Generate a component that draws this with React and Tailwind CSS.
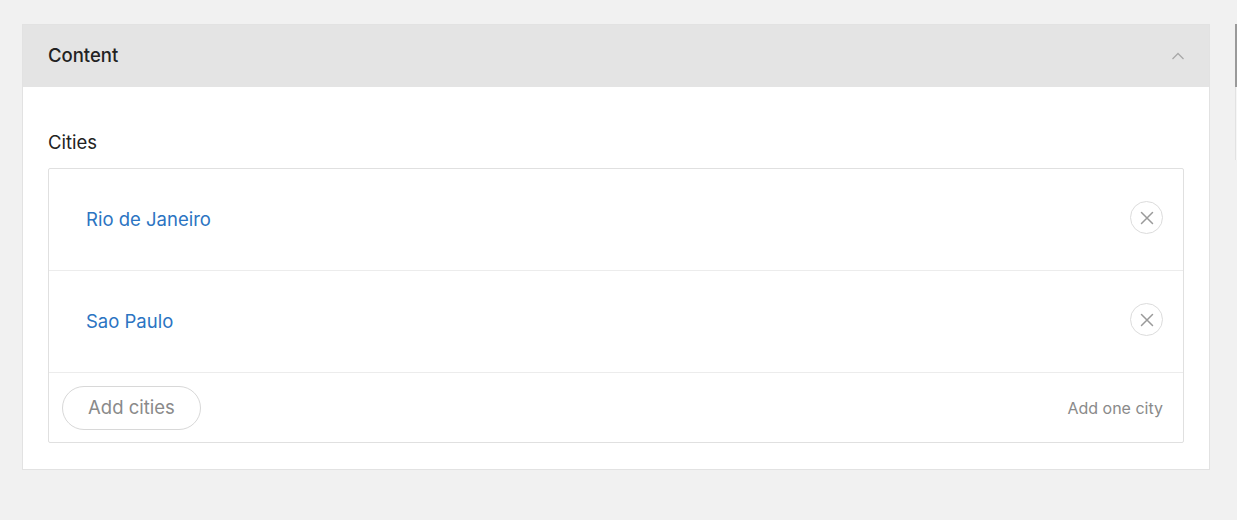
import React, { useState } from 'react';

const initialCities = ['Rio de Janeiro', 'Sao Paulo'];

const CloseIcon = () => (
  <svg width="14" height="14" viewBox="0 0 14 14" fill="none">
    <path d="M1.5 1.5L12.5 12.5M12.5 1.5L1.5 12.5" stroke="#9a9a9a" strokeWidth="1.5" strokeLinecap="round" />
  </svg>
);

const ChevronUp = () => (
  <svg width="14" height="8" viewBox="0 0 14 8" fill="none">
    <path d="M1.5 7L7 1.5L12.5 7" stroke="#a8a8a8" strokeWidth="1.3" />
  </svg>
);

const App = () => {
  const [cities, setCities] = useState(initialCities);

  return (
    <div className="min-h-[520px] bg-[#f1f1f1] pt-6 pl-[22px] flex overflow-hidden font-['Inter','Liberation_Sans',sans-serif]">
      <section className="w-[1188px] shrink-0 self-start border border-[#e2e2e2] bg-white">
        {/* en-tête du panneau */}
        <div className="h-[62px] bg-[#e4e4e4] flex items-center justify-between pl-[25px] pr-[24px]">
          <h2 className="text-[18.5px] font-medium text-[#222]">Content</h2>
          <ChevronUp />
        </div>

        <div className="pt-[42px] pb-[26px] pl-[25px] pr-[25px]">
          <label className="block text-[18.5px] leading-[27px] text-[#222] mb-[12px]">Cities</label>

          <div className="border border-[#e0e0e0] rounded-[2px]">
            {cities.map((city) => (
              <div key={city} className="h-[102px] border-b border-[#ececec] flex items-center justify-between pl-[37px] pr-[20px]">
                <span className="text-[18.5px] text-[#2b74c2]">{city}</span>
                <button
                  onClick={() => setCities(cities.filter((c) => c !== city))}
                  className="w-[33px] h-[33px] -mt-1 rounded-full border border-[#dcdcdc] flex items-center justify-center"
                >
                  <CloseIcon />
                </button>
              </div>
            ))}

            {/* pied de liste */}
            <div className="h-[69px] flex items-center justify-between pl-[13px] pr-[20px]">
              <button className="h-[44px] w-[139px] rounded-full border border-[#d8d8d8] text-[18.5px] text-[#8a8a8a]">
                Add cities
              </button>
              <span className="text-[16px] text-[#8a8a8a]">Add one city</span>
            </div>
          </div>
        </div>
      </section>

      {/* bord du panneau suivant */}
      <div className="ml-[25px] w-[40px] shrink-0 self-start">
        <div className="h-[63px] border-l-2 border-[#9a9a9a] bg-[#f1f1f1]" />
        <div className="h-[73px] border-l border-[#e2e2e2] bg-[#f6f6f6]" />
      </div>
    </div>
  );
};

export default App;
